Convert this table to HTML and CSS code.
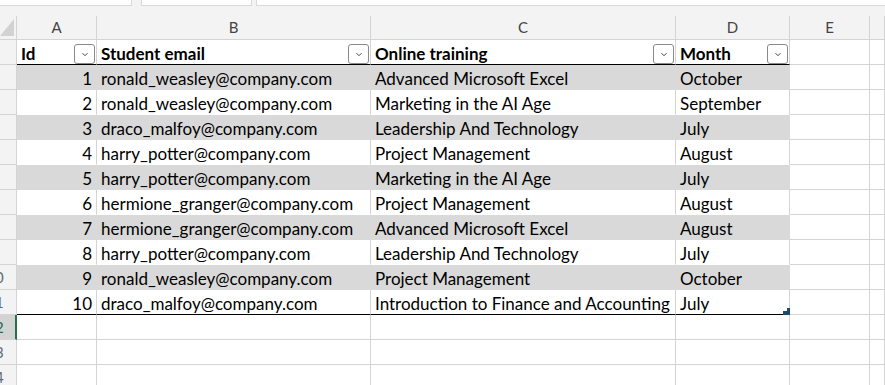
FILE: index.html
```html
<!DOCTYPE html>
<html lang="en">
<head>
<meta charset="UTF-8">
<title>Online trainings</title>
<link rel="stylesheet" href="styles.css">
</head>
<body>

<div class="tabs">
  <span class="tab tab-1"></span>
  <span class="tab tab-2"></span>
  <span class="tab tab-3"></span>
</div>

<div class="sheet">
  <!-- column letters -->
  <div class="corner"><span class="corner-tri"></span></div>
  <div class="colhead">A</div>
  <div class="colhead">B</div>
  <div class="colhead">C</div>
  <div class="colhead">D</div>
  <div class="colhead">E</div>
  <div class="colhead"></div>

  <!-- table header -->
  <div class="rowhead"><span>1</span></div>
  <div class="th"><span>Id</span><button class="filter"><svg width="8" height="5" viewBox="0 0 8 5"><path d="M1.5 1.2L4 3.7 6.5 1.2" fill="none" stroke="#444"/></svg></button></div>
  <div class="th"><span>Student email</span><button class="filter"><svg width="8" height="5" viewBox="0 0 8 5"><path d="M1.5 1.2L4 3.7 6.5 1.2" fill="none" stroke="#444"/></svg></button></div>
  <div class="th"><span>Online training</span><button class="filter"><svg width="8" height="5" viewBox="0 0 8 5"><path d="M1.5 1.2L4 3.7 6.5 1.2" fill="none" stroke="#444"/></svg></button></div>
  <div class="th"><span>Month</span><button class="filter"><svg width="8" height="5" viewBox="0 0 8 5"><path d="M1.5 1.2L4 3.7 6.5 1.2" fill="none" stroke="#444"/></svg></button></div>
  <div class="cell"></div>
  <div class="cell"></div>

  <div class="rowhead"><span>2</span></div>
  <div class="td alt num">1</div>
  <div class="td alt">ronald_weasley@company.com</div>
  <div class="td alt">Advanced Microsoft Excel</div>
  <div class="td alt">October</div>
  <div class="cell"></div>
  <div class="cell"></div>

  <div class="rowhead"><span>3</span></div>
  <div class="td num">2</div>
  <div class="td">ronald_weasley@company.com</div>
  <div class="td">Marketing in the AI Age</div>
  <div class="td">September</div>
  <div class="cell"></div>
  <div class="cell"></div>

  <div class="rowhead"><span>4</span></div>
  <div class="td alt num">3</div>
  <div class="td alt">draco_malfoy@company.com</div>
  <div class="td alt">Leadership And Technology</div>
  <div class="td alt">July</div>
  <div class="cell"></div>
  <div class="cell"></div>

  <div class="rowhead"><span>5</span></div>
  <div class="td num">4</div>
  <div class="td">harry_potter@company.com</div>
  <div class="td">Project Management</div>
  <div class="td">August</div>
  <div class="cell"></div>
  <div class="cell"></div>

  <div class="rowhead"><span>6</span></div>
  <div class="td alt num">5</div>
  <div class="td alt">harry_potter@company.com</div>
  <div class="td alt">Marketing in the AI Age</div>
  <div class="td alt">July</div>
  <div class="cell"></div>
  <div class="cell"></div>

  <div class="rowhead"><span>7</span></div>
  <div class="td num">6</div>
  <div class="td">hermione_granger@company.com</div>
  <div class="td">Project Management</div>
  <div class="td">August</div>
  <div class="cell"></div>
  <div class="cell"></div>

  <div class="rowhead"><span>8</span></div>
  <div class="td alt num">7</div>
  <div class="td alt">hermione_granger@company.com</div>
  <div class="td alt">Advanced Microsoft Excel</div>
  <div class="td alt">August</div>
  <div class="cell"></div>
  <div class="cell"></div>

  <div class="rowhead"><span>9</span></div>
  <div class="td num">8</div>
  <div class="td">harry_potter@company.com</div>
  <div class="td">Leadership And Technology</div>
  <div class="td">July</div>
  <div class="cell"></div>
  <div class="cell"></div>

  <div class="rowhead"><span>10</span></div>
  <div class="td alt num">9</div>
  <div class="td alt">ronald_weasley@company.com</div>
  <div class="td alt">Project Management</div>
  <div class="td alt">October</div>
  <div class="cell"></div>
  <div class="cell"></div>

  <div class="rowhead"><span>11</span></div>
  <div class="td end num">10</div>
  <div class="td end">draco_malfoy@company.com</div>
  <div class="td end">Introduction to Finance and Accounting</div>
  <div class="td end corner-cell">July<span class="resize"></span></div>
  <div class="cell"></div>
  <div class="cell"></div>

  <!-- empty rows below the table -->
  <div class="rowhead active"><span>12</span></div>
  <div class="cell"></div>
  <div class="cell"></div>
  <div class="cell"></div>
  <div class="cell"></div>
  <div class="cell"></div>
  <div class="cell"></div>

  <div class="rowhead"><span>13</span></div>
  <div class="cell"></div>
  <div class="cell"></div>
  <div class="cell"></div>
  <div class="cell"></div>
  <div class="cell"></div>
  <div class="cell"></div>

  <div class="rowhead"><span>14</span></div>
  <div class="cell"></div>
  <div class="cell"></div>
  <div class="cell"></div>
  <div class="cell"></div>
  <div class="cell"></div>
  <div class="cell"></div>
</div>

</body>
</html>
```

FILE: styles.css
```css
* {
  box-sizing: border-box;
}

body {
  margin: 0;
  background: #fff;
  font-family: 'Lato', 'Liberation Sans', sans-serif;
  font-size: 17px;
  color: #000;
  overflow: hidden;
}

/* strip of ribbon boxes along the top */
.tabs {
  height: 16px;
  background: #f3f3f3;
  display: flex;
  align-items: flex-start;
}

.tab {
  height: 6px;
  background: #fff;
  border: 1px solid #dadada;
  border-top: none;
}

.tab-1 {
  width: 132px;
  border-left: none;
}

.tab-2 {
  width: 111px;
  margin-left: 9px;
}

.tab-3 {
  flex: 1;
  margin-left: 4px;
  border-right: none;
}

/* grid */
.sheet {
  display: grid;
  grid-template-columns: 17px 80px 274px 305px 114px 80px 1fr;
  grid-template-rows: 24px repeat(14, 25px);
}

.sheet > div {
  border-right: 1px solid #d4d4d4;
  border-bottom: 1px solid #d4d4d4;
  overflow: hidden;
  white-space: nowrap;
}

.corner {
  background: #f3f3f3;
  position: relative;
}

.corner-tri {
  position: absolute;
  right: 2px;
  bottom: 3px;
  width: 0;
  height: 0;
  border-left: 14px solid transparent;
  border-bottom: 17px solid #d2d2d2;
}

.colhead {
  background: #f3f3f3;
  color: #444;
  font-size: 15px;
  line-height: 23px;
  text-align: center;
}

.rowhead {
  background: #f3f3f3;
  color: #5c6b7a;
  font-size: 15px;
}

.rowhead span {
  display: block;
  width: 36px;
  margin-left: -23px;
  text-align: center;
  line-height: 25px;
}

.rowhead.active {
  background: #d3d3d3;
  color: #1e6b45;
  border-right: 2px solid #217346;
}

/* table header row */
.th {
  display: flex;
  align-items: flex-end;
  background: #fff;
  font-weight: bold;
  padding-left: 4px;
}

.sheet > .th {
  border-bottom-color: #000;
}

.th span {
  line-height: 23px;
  margin-bottom: -1px;
}

.filter {
  margin: 0 1px 0 auto;
  width: 21px;
  height: 20px;
  padding: 0;
  border: 1px solid #8a8a8a;
  border-radius: 3px;
  background: #fff;
  display: flex;
  align-items: center;
  justify-content: center;
}

/* table body */
.td {
  padding: 1px 4px 0;
  line-height: 25px;
}

.sheet > .td {
  border-bottom-color: #fff;
}

.sheet > .alt {
  background: #d9d9d9;
  border-right-color: #d9d9d9;
  border-bottom-color: #d9d9d9;
}

.sheet > .end {
  border-bottom-color: #000;
}

.num {
  text-align: right;
}

.sheet > .corner-cell {
  position: relative;
  overflow: visible;
}

.resize {
  position: absolute;
  right: -1px;
  bottom: -1px;
  width: 7px;
  height: 4px;
  background: #1b4a6e;
}

.resize::before {
  content: "";
  position: absolute;
  right: 0;
  bottom: 4px;
  width: 3px;
  height: 3px;
  background: #1b4a6e;
}
```
